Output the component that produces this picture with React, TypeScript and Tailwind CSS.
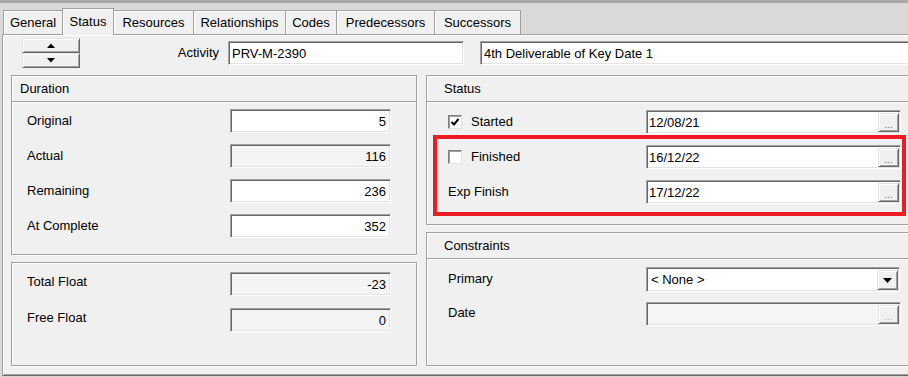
import React from "react";

const sunken =
  "border border-t-[#a0a0a0] border-l-[#a0a0a0] border-r-white border-b-white shadow-[inset_1px_1px_0_#696969,inset_-1px_-1px_0_#e3e3e3]";
const raised =
  "bg-[#f0f0f0] border border-t-[#e3e3e3] border-l-[#e3e3e3] border-r-[#696969] border-b-[#696969] shadow-[inset_1px_1px_0_#fff,inset_-1px_-1px_0_#a0a0a0]";

function Panel({
  title,
  hClass,
  children,
  titlePad,
}: {
  title?: string;
  hClass: string;
  children?: React.ReactNode;
  titlePad?: string;
}) {
  return (
    <div
      className={`relative bg-[#f0f0f0] border border-[#a0a0a0] shadow-[inset_1px_1px_0_#fff,1px_1px_0_#fff] ${hClass}`}
    >
      {title && (
        <div
          className={`h-[26px] border-b border-[#a0a0a0] shadow-[0_1px_0_#fff] flex items-center ${titlePad ?? "pl-[8px]"}`}
        >
          {title}
        </div>
      )}
      {children}
    </div>
  );
}

function NumField({ value, ro }: { value: string; ro?: boolean }) {
  return (
    <div
      className={`${sunken} ${ro ? "bg-[#f4f4f4]" : "bg-white"} shrink-0 w-[161px] h-[24px] flex items-center justify-end pr-[4px]`}
    >
      {value}
    </div>
  );
}

function Ellipsis({ dim }: { dim?: boolean }) {
  return (
    <div
      className={`absolute right-[1px] top-[2px] bottom-[1px] w-[21px] ${raised} flex items-end justify-center pb-[1px]`}
    >
      <span
        className={`text-[10px] leading-[10px] tracking-[0px] ${dim ? "text-[#b0b0c0]" : "text-[#6a6a8a]"}`}
      >
        ...
      </span>
    </div>
  );
}

function DateField({ value, ro }: { value?: string; ro?: boolean }) {
  return (
    <div
      className={`relative shrink-0 ${sunken} ${ro ? "bg-[#f5f5f5]" : "bg-white"} w-[255px] h-[24px] flex items-center pl-[2px]`}
    >
      {value}
      <Ellipsis dim={ro} />
    </div>
  );
}

function Checkbox({ checked }: { checked?: boolean }) {
  return (
    <div className="shrink-0 w-[14px] h-[14px] bg-white border border-t-[#808080] border-l-[#808080] border-r-[#e3e3e3] border-b-[#e3e3e3] shadow-[inset_1px_1px_0_#a0a0a0] flex items-center justify-center">
      {checked && (
        <svg width="10" height="10" viewBox="0 0 10 10">
          <path d="M1.5 5 L4 7.5 L8.5 2" stroke="#000" strokeWidth="2" fill="none" />
        </svg>
      )}
    </div>
  );
}

const tabs: { label: string; cls: string; sel?: boolean }[] = [
  { label: "General", cls: "w-[59px]" },
  { label: "Status", cls: "w-[52px]", sel: true },
  { label: "Resources", cls: "w-[80px]" },
  { label: "Relationships", cls: "w-[92px]" },
  { label: "Codes", cls: "w-[51px]" },
  { label: "Predecessors", cls: "w-[98px]" },
  { label: "Successors", cls: "w-[87px] border-r" },
];

export default function App() {
  return (
    <div className="w-[908px] h-[377px] overflow-hidden bg-[#d9d9d9] font-['Liberation_Sans',Arial,sans-serif] text-[13px] text-black leading-none">
      <div className="h-[3px] bg-[#a8a8a8]" />
      {/* tab strip */}
      <div className="h-[31px] flex items-end pl-[3px]">
        {tabs.map((t) =>
          t.sel ? (
            <div
              key={t.label}
              className={`${t.cls} shrink-0 relative z-10 -mr-[1px] -mb-[1px] h-[27px] bg-[#f0f0f0] border-t border-l border-r border-[#a0a0a0] shadow-[inset_1px_1px_0_#fff] flex items-center justify-center pb-[1px]`}
            >
              {t.label}
            </div>
          ) : (
            <div
              key={t.label}
              className={`${t.cls} shrink-0 h-[24px] bg-[#f0f0f0] border-t border-l border-[#a0a0a0] shadow-[inset_1px_1px_0_#fff] flex items-center justify-center`}
            >
              {t.label}
            </div>
          )
        )}
      </div>
      {/* page */}
      <div className="ml-[2px] w-[930px] h-[342px] bg-[#f0f0f0] border-t border-l border-b border-t-[#a0a0a0] border-l-[#a0a0a0] border-b-[#696969] shadow-[inset_1px_1px_0_#fff,inset_0_-1px_0_#a0a0a0] pt-[3px]">
        {/* top row */}
        <div className="h-[30px] flex items-center">
          <div className="shrink-0 ml-[19px] w-[58px] h-[30px] flex flex-col">
            <div className={`${raised} h-[15px] flex items-center justify-center`}>
              <svg width="8" height="5" viewBox="0 0 8 5">
                <path d="M0 5 L4 0.5 L8 5 Z" fill="#000" />
              </svg>
            </div>
            <div className={`${raised} h-[15px] flex items-center justify-center`}>
              <svg width="8" height="5" viewBox="0 0 8 5">
                <path d="M0 0 L8 0 L4 4.5 Z" fill="#000" />
              </svg>
            </div>
          </div>
          <div className="shrink-0 w-[139px] text-right mb-[2px]">Activity</div>
          <div className={`shrink-0 ml-[9px] w-[236px] h-[24px] bg-white ${sunken} flex items-center pl-[3px]`}>
            PRV-M-2390
          </div>
          <div className={`shrink-0 ml-[16px] w-[440px] h-[24px] bg-white ${sunken} flex items-center pl-[3px]`}>
            4th Deliverable of Key Date 1
          </div>
        </div>

        {/* panels */}
        <div className="mt-[7px] pl-[8px] flex">
          {/* left column */}
          <div className="shrink-0 w-[406px] flex flex-col gap-[7px]">
            <Panel title="Duration" hClass="h-[180px]">
              <div className="pt-[7px] flex flex-col gap-[11px]">
                {[
                  ["Original", "5", false],
                  ["Actual", "116", true],
                  ["Remaining", "236", false],
                  ["At Complete", "352", false],
                ].map(([l, v, ro]) => (
                  <div key={l as string} className="h-[24px] flex items-center pl-[15px]">
                    <div className="shrink-0 w-[203px] mb-[2px]">{l}</div>
                    <NumField value={v as string} ro={ro as boolean} />
                  </div>
                ))}
              </div>
            </Panel>
            <Panel hClass="h-[104px]">
              <div className="pt-[9px] flex flex-col gap-[12px]">
                {[
                  ["Total Float", "-23"],
                  ["Free Float", "0"],
                ].map(([l, v]) => (
                  <div key={l} className="h-[24px] flex items-center pl-[15px]">
                    <div className="shrink-0 w-[203px] mb-[5px]">{l}</div>
                    <NumField value={v} ro />
                  </div>
                ))}
              </div>
            </Panel>
          </div>

          {/* right column */}
          <div className="ml-[9px] w-[490px] shrink-0 flex flex-col gap-[7px]">
            <Panel title="Status" hClass="h-[150px]" titlePad="pl-[17px]">
              <div className="pt-[8px] flex flex-col gap-[11px]">
                <div className="h-[24px] flex items-center pl-[21px]">
                  <div className="shrink-0 w-[198px] flex items-center">
                    <Checkbox checked />
                    <span className="ml-[9px] mb-[2px]">Started</span>
                  </div>
                  <DateField value="12/08/21" />
                </div>
                <div className="h-[24px] flex items-center pl-[21px]">
                  <div className="shrink-0 w-[198px] flex items-center">
                    <Checkbox />
                    <span className="ml-[9px] mb-[2px]">Finished</span>
                  </div>
                  <DateField value="16/12/22" />
                </div>
                <div className="h-[24px] flex items-center pl-[21px]">
                  <div className="shrink-0 w-[198px] mb-[2px]">Exp Finish</div>
                  <DateField value="17/12/22" />
                </div>
              </div>
              <div className="absolute top-[59px] left-[6px] w-[473px] h-[81px] border-4 border-[#ed1c24]" />
            </Panel>
            <Panel title="Constraints" hClass="h-[134px]" titlePad="pl-[17px]">
              <div className="pt-[8px] flex flex-col gap-[10px]">
                <div className="h-[25px] flex items-center pl-[21px]">
                  <div className="shrink-0 w-[198px] mb-[3px]">Primary</div>
                  <div className={`relative shrink-0 ${sunken} bg-white w-[254px] h-[25px] flex items-center pl-[4px]`}>
                    &lt; None &gt;
                    <div className={`absolute right-[1px] top-[2px] bottom-[1px] w-[21px] ${raised} flex items-center justify-center`}>
                      <svg width="9" height="5" viewBox="0 0 9 5">
                        <path d="M0 0 L9 0 L4.5 5 Z" fill="#000" />
                      </svg>
                    </div>
                  </div>
                </div>
                <div className="h-[24px] flex items-center pl-[21px]">
                  <div className="shrink-0 w-[198px] mb-[3px]">Date</div>
                  <DateField ro />
                </div>
              </div>
            </Panel>
          </div>
        </div>
      </div>
    </div>
  );
}
